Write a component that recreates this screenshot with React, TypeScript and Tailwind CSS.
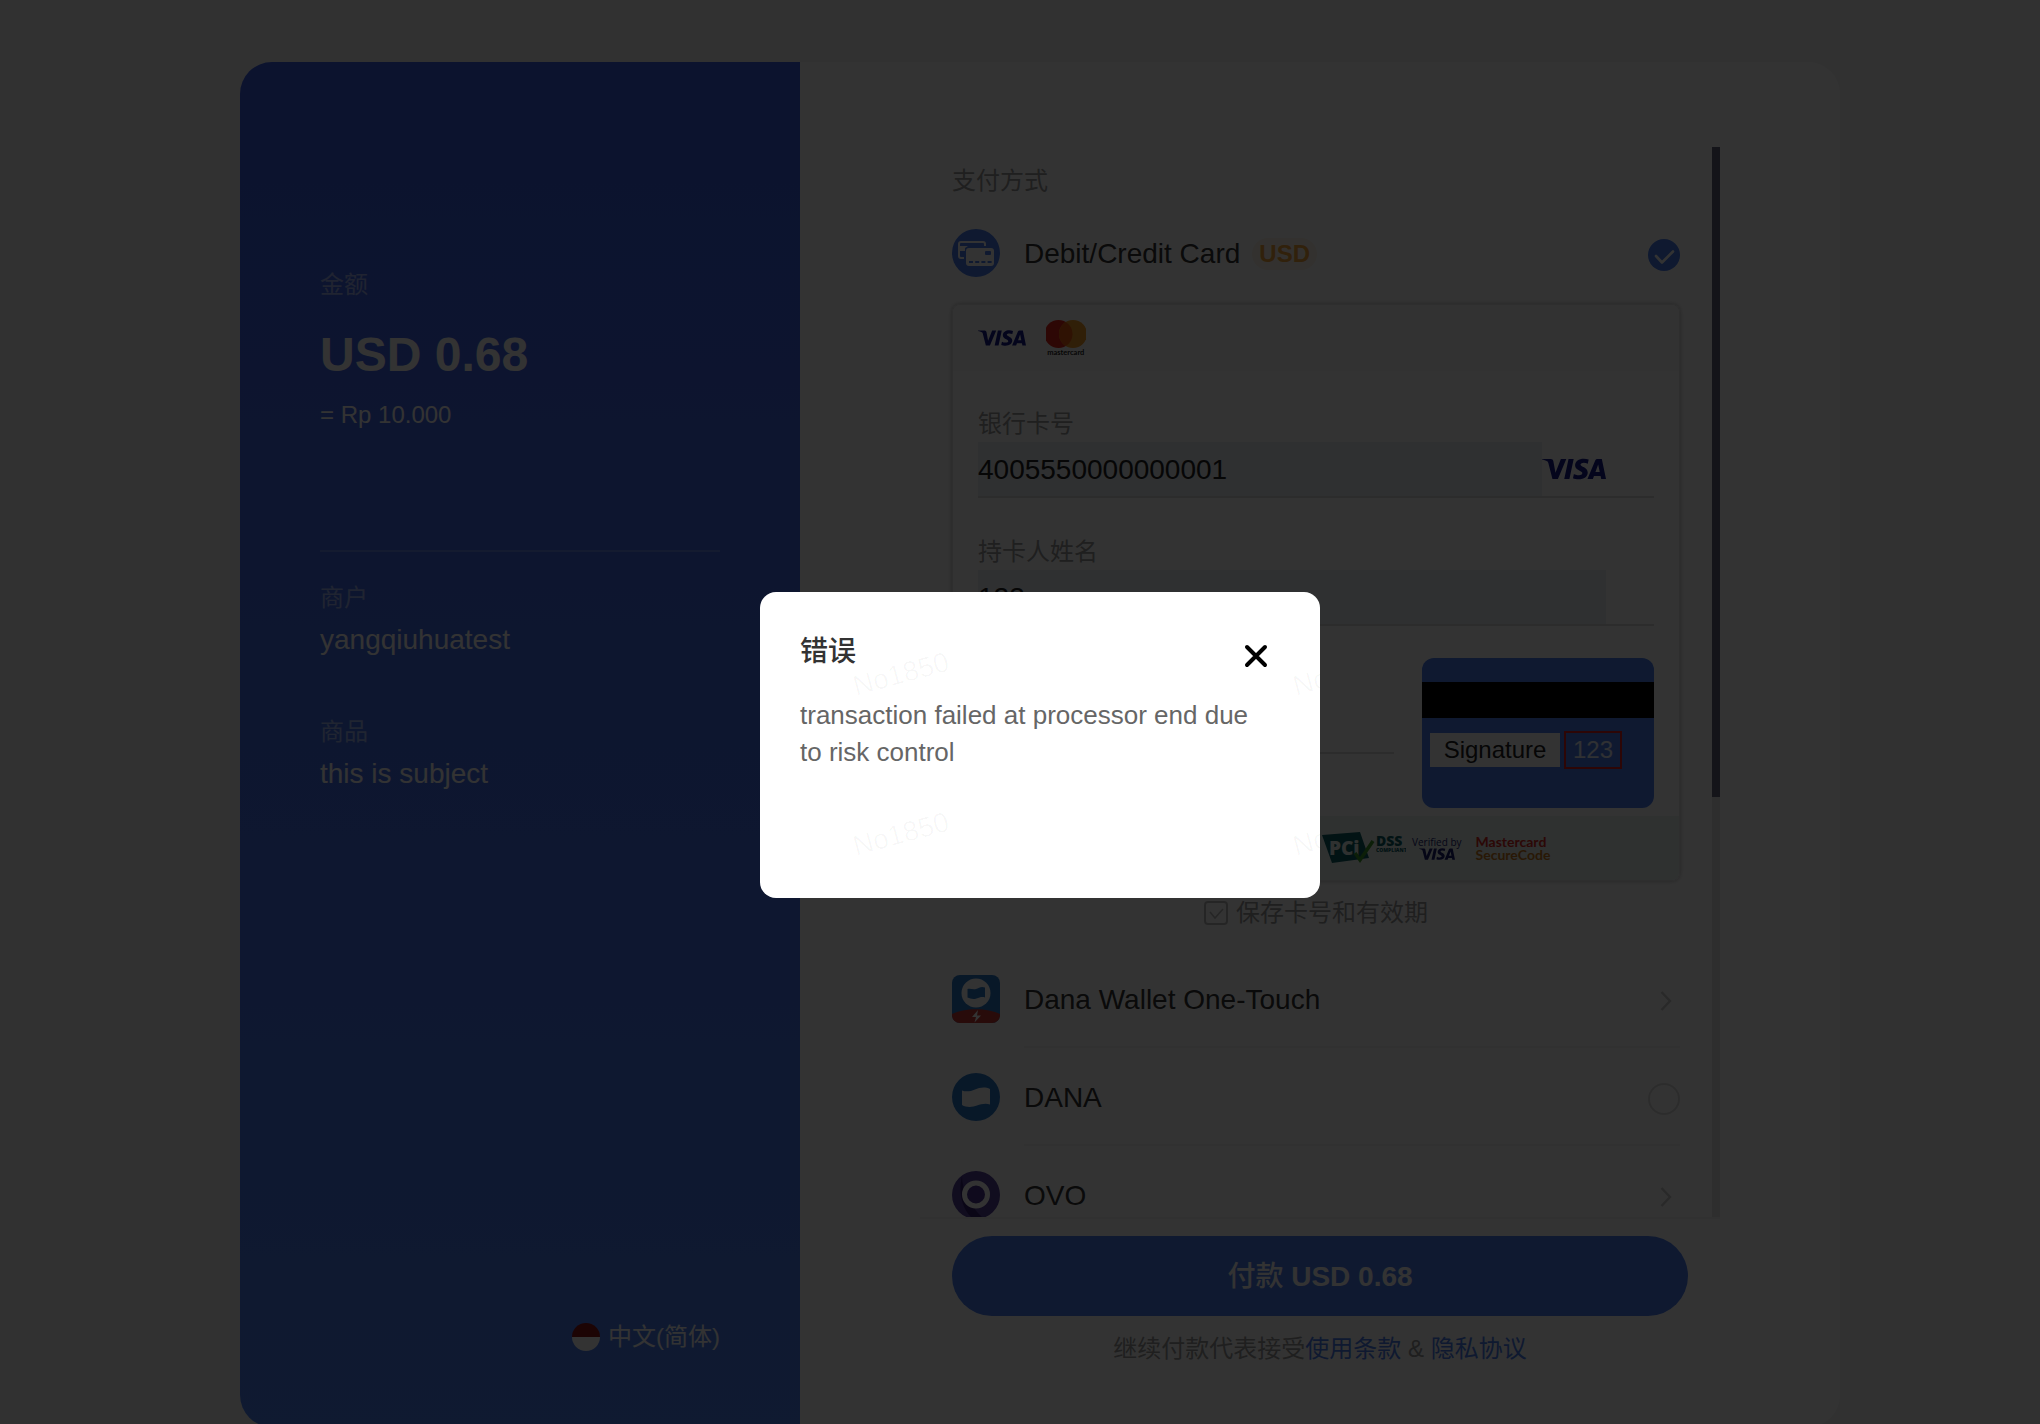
import React from "react";
import { SiVisa } from "react-icons/si";

const App: React.FC = () => {
  return (
    <div className="relative h-screen overflow-hidden bg-[#f5f5f5] font-['Liberation_Sans','Noto_Sans_CJK_SC',sans-serif]">
      <div className="pl-10 pt-[62px]">
        <main className="mx-auto flex w-full max-w-[1600px] overflow-hidden rounded-[32px] bg-white">
          <OrderSummary />
          <PaymentPanel />
        </main>
      </div>
      <ErrorDialog />
    </div>
  );
};

export default App;

/* left: amount, merchant, product and language */
function OrderSummary() {
  return (
    <aside className="flex w-[35%] shrink-0 flex-col bg-linear-to-b from-[#3d5fe6] to-[#4c80f2] px-20 pb-[72px] pt-[205px] text-white">
      <p className="text-2xl leading-9 text-white/50">金额</p>
      <p className="mt-6 text-5xl font-bold leading-[56px]">USD 0.68</p>
      <p className="mt-3.5 text-2xl leading-9">= Rp 10.000</p>
      <hr className="mt-[117px] border-t-2 border-white/20" />
      <dl>
        <dt className="mt-7 text-2xl leading-9 text-white/50">商户</dt>
        <dd className="mt-1 text-[28px] leading-10">yangqiuhuatest</dd>
        <dt className="mt-[54px] text-2xl leading-9 text-white/50">商品</dt>
        <dd className="mt-1 text-[28px] leading-10">this is subject</dd>
      </dl>
      <button type="button" className="mt-auto flex items-center gap-2 self-end text-2xl leading-9">
        <svg viewBox="0 0 28 28" className="size-7" aria-hidden="true">
          <path d="M0 14a14 14 0 0128 0z" fill="#8c1418" />
          <path d="M0 14a14 14 0 0028 0z" fill="#fff" />
        </svg>
        中文(简体)
      </button>
    </aside>
  );
}

/* right: scrolling list of methods, then the pay button */
function PaymentPanel() {
  return (
    <section className="flex min-w-0 flex-1 flex-col px-[120px] pb-[60px] pt-[85px]">
      <div className="flex h-[calc(100vh-352px)] overflow-hidden border-b-2 border-[#f5f5f5]">
        <div className="min-w-0 flex-1 px-8 pt-4">
          <p className="mb-[5px] text-2xl leading-9 text-[#999]">支付方式</p>

          <MethodRow id="card" label="Debit/Credit Card" tag="USD" end="checked" icon={<CardIcon />} />
          <CardForm />

          <label className="mt-3.5 flex items-center justify-center gap-2 text-2xl leading-9 text-[#999]">
            <span className="relative flex size-6">
              <input type="checkbox" defaultChecked className="size-6 appearance-none rounded border-2 border-[#bbb]" />
              <svg viewBox="0 0 24 24" className="absolute inset-0" fill="none" stroke="#bbb" strokeWidth="1.6" aria-hidden="true">
                <path d="M6 11l5 6 8-9" />
              </svg>
            </span>
            保存卡号和有效期
          </label>

          <div className="mt-[19px]">
            <MethodRow id="dana-ot" label="Dana Wallet One-Touch" end="arrow" icon={<DanaOneTouchIcon />} line />
            <MethodRow id="dana" label="DANA" end="radio" icon={<DanaIcon />} line />
            <MethodRow id="ovo" label="OVO" end="arrow" icon={<OvoIcon />} />
          </div>
        </div>
        {/* scroll track */}
        <div className="w-2 shrink-0 bg-[#e6e6e6]">
          <div className="h-[650px] bg-[#63657d]" />
        </div>
      </div>

      <button
        type="button"
        className="mx-8 mt-[17px] h-20 rounded-full bg-[#4a7df0] pt-0.5 text-[28px] font-bold text-white"
      >
        <span className="font-medium">付款</span> USD 0.68
      </button>
      <p className="mt-[15px] text-center text-2xl leading-9 text-[#999]">
        继续付款代表接受
        <a href="#terms" className="text-[#4a7df0]">使用条款</a> &amp;{" "}
        <a href="#privacy" className="text-[#4a7df0]">隐私协议</a>
      </p>
    </section>
  );
}

function MethodRow({
  id,
  label,
  tag,
  end,
  icon,
  line,
}: {
  id: string;
  label: string;
  tag?: string;
  end: "checked" | "radio" | "arrow";
  icon: React.ReactNode;
  line?: boolean;
}) {
  return (
    <div className="flex gap-6">
      <span className="flex h-24 shrink-0 items-center pt-0.5">{icon}</span>
      <div
        className={
          line
            ? "flex h-[98px] flex-1 items-center border-b-2 border-[#f2f2f2] pt-1"
            : "flex h-[98px] flex-1 items-center border-b-2 border-transparent pt-1"
        }
      >
        <label htmlFor={id} className="text-[28px] leading-10 text-[#333]">
          {label}
        </label>
        {tag && (
          <span className="ml-3 rounded-full bg-[#fff5e8] px-[7px] text-2xl font-bold leading-8 text-[#f5a33b]">
            {tag}
          </span>
        )}
        {end === "arrow" ? (
          <button type="button" id={id} aria-label={label} className="ml-auto mr-2 mt-0.5">
            <svg viewBox="0 0 12 20" className="h-5 w-3" fill="none" stroke="#ccc" strokeWidth="2.4" aria-hidden="true">
              <path d="M1.5 1l8.5 9-8.5 9" />
            </svg>
          </button>
        ) : (
          <span className="relative ml-auto mt-0.5 flex size-8">
            <input
              type="radio"
              name="method"
              id={id}
              defaultChecked={end === "checked"}
              className="size-8 appearance-none rounded-full border-2 border-[#ddd] checked:border-0 checked:bg-[#4a7df0]"
            />
            {end === "checked" && (
              <svg viewBox="0 0 32 32" className="absolute inset-0" fill="none" stroke="#fff" strokeWidth="2.6" strokeLinecap="round" strokeLinejoin="round" aria-hidden="true">
                <path d="M8 17l6 6.500 11-11" />
              </svg>
            )}
          </span>
        )}
      </div>
    </div>
  );
}

function CardForm() {
  return (
    <div className="mt-0.5 overflow-hidden rounded-lg border border-[#e4e4e4] shadow-[0_0_4px_rgba(0,0,0,0.3)]">
      <div className="flex h-[66px] items-center gap-5 bg-[#fafafa] px-[25px]">
        <SiVisa className="size-12 text-[#141c8c]" title="VISA" />
        <Mastercard />
      </div>

      <div className="flex flex-col gap-9 px-[25px] pb-8 pt-[35px]">
        <Field id="number" label="银行卡号" value="4005550000000001" visa />
        <Field id="holder" label="持卡人姓名" value="123" />
      </div>

      <div className="flex items-start gap-7 px-[25px]">
        <div className="h-24 flex-1 border-b-2 border-[#ddd]" />
        <CardBack />
      </div>

      <div className="mt-2 flex h-16 items-center bg-[#ebf3f1] pl-[369px]">
        <SecurityLogos />
      </div>
    </div>
  );
}

function Field({ id, label, value, visa }: { id: string; label: string; value: string; visa?: boolean }) {
  return (
    <div className="border-b-2 border-[#ddd]">
      <label htmlFor={id} className="block text-2xl leading-9 text-[#999]">
        {label}
      </label>
      <div className="flex h-[54px] items-center pr-12">
        <input
          id={id}
          defaultValue={value}
          className="h-full min-w-0 flex-1 bg-[#e8edf3] pt-0.5 text-[28px] text-[#222] outline-none"
        />
        {visa && <SiVisa className="size-16" color="#141c8c" title="VISA" />}
      </div>
    </div>
  );
}

/* back of a card, pointing at the cvv digits */
function CardBack() {
  return (
    <div className="h-[150px] w-[232px] rounded-xl bg-[#4a7df0] pt-6">
      <div className="h-9 bg-black" />
      <div className="mt-[13px] flex items-center gap-1 pl-2 text-2xl">
        <span className="flex h-[34px] w-[130px] items-center justify-center bg-white text-[#222]">Signature</span>
        <span className="flex h-[38px] w-[58px] items-center justify-center border-2 border-[#e02020] text-white/90">123</span>
      </div>
    </div>
  );
}

function Mastercard() {
  return (
    <svg viewBox="0 0 40 38" className="h-[38px] w-10" aria-label="mastercard">
      <circle cx="12.500" cy="15" r="14" fill="#e0241c" />
      <circle cx="27" cy="15" r="14" fill="#f09a28" />
      <path d="M19.750 3a14 14 0 010 24 14 14 0 010-24z" fill="#e85c12" />
      <text x="19.750" y="36" textAnchor="middle" fontSize="7.500" fontFamily="Lato, sans-serif" fontWeight="700" fill="#222">
        mastercard
      </text>
    </svg>
  );
}

function SecurityLogos() {
  return (
    <div className="flex items-center gap-1.5">
      <svg viewBox="0 0 84 32" className="h-8 w-[84px]" aria-label="PCI DSS Compliant">
        <path d="M0 3l38-3 9 26-37 5z" fill="#0d5f63" />
        <text x="7" y="23" fontSize="19" fontFamily="Open Sans, sans-serif" fontWeight="800" fill="#ebf3f1">PCi</text>
        <path d="M33 21l5 7 13-19" fill="none" stroke="#3f9a2a" strokeWidth="3.5" />
        <text x="54" y="14" fontSize="14" fontFamily="Open Sans, sans-serif" fontWeight="800" fill="#0d5f63">DSS</text>
        <text x="54" y="20" fontSize="5" fontFamily="Open Sans, sans-serif" fontWeight="800" fill="#0d5f63">COMPLIANT</text>
      </svg>
      <div className="flex flex-col items-center text-[10px] leading-3 text-[#1a1f71]">
        <span className="font-['Open_Sans',sans-serif]">Verified by</span>
        <span className="flex h-3 items-center">
          <SiVisa className="size-9" title="VISA" />
        </span>
      </div>
      <div className="ml-2 flex flex-col font-['Lato',sans-serif] text-sm font-bold leading-[13px]">
        <span className="text-[#d92a22]">Mastercard</span>
        <span className="text-[#c97a20]">SecureCode</span>
      </div>
    </div>
  );
}

/* ——— method icons ——— */
function CardIcon() {
  return (
    <svg viewBox="0 0 48 48" className="size-12" aria-hidden="true">
      <circle cx="24" cy="24" r="24" fill="#4a7df0" />
      <path d="M12 29h-3a2 2 0 01-2-2V15a2 2 0 012-2h22a2 2 0 012 2v2" fill="none" stroke="#fff" strokeWidth="2" />
      <path d="M7 17h9l-3 2v3H7z" fill="#fff" />
      <rect x="14" y="19" width="28" height="18" rx="3" fill="#fff" />
      <rect x="33" y="22" width="6" height="4" rx="1" fill="#4a7df0" />
      <path d="M17 33h23" stroke="#4a7df0" strokeWidth="2" strokeDasharray="4 2.200" />
    </svg>
  );
}

function DanaOneTouchIcon() {
  return (
    <svg viewBox="0 0 48 48" className="size-12 rounded-lg" aria-hidden="true">
      <rect width="48" height="48" fill="#2a78c8" />
      <circle cx="24" cy="18" r="14.500" fill="#fff" />
      <path d="M15.500 14c3-1 5.500 1 8.500 0s5-3 9-1.500v10c-3-1-5.500 0-8.500 1s-6 .5-9-1z" fill="#2a78c8" />
      <path d="M0 39c12-6.500 36-6.500 48 0v9H0z" fill="#c83a34" />
      <path d="M26 35l-6 7h4l-1.500 5.500 6.500-7h-4z" fill="#fff" />
    </svg>
  );
}

function DanaIcon() {
  return (
    <svg viewBox="0 0 48 48" className="size-12" aria-hidden="true">
      <circle cx="24" cy="24" r="24" fill="#2a78c8" />
      <path d="M10 17.500c4 1.500 8.500 1 13-1s10-3 15-.5v15.500c-4-1.500-9-.5-13 1s-10 2.500-15-.5z" fill="#fff" />
    </svg>
  );
}

function OvoIcon() {
  return (
    <svg viewBox="0 0 48 48" className="size-12" aria-hidden="true">
      <circle cx="24" cy="24" r="24" fill="#55409a" />
      <path d="M10 5c0 14 8 30 21 42a24 24 0 01-11 0C10 38 6 22 10 5z" fill="#341f6e" />
      <circle cx="24" cy="23.500" r="11.500" fill="#4b3590" stroke="#fff" strokeWidth="5" />
    </svg>
  );
}

/* dimmed backdrop and the message over it */
function ErrorDialog() {
  return (
    <div className="absolute inset-0 flex items-center justify-center bg-black/80 pl-10 pt-[66px]">
      <div role="alertdialog" aria-labelledby="err-title" className="relative min-h-[306px] w-[560px] overflow-hidden rounded-2xl bg-white px-10 pt-10">
        <div className="flex items-start justify-between">
          <h2 id="err-title" className="text-[28px] font-medium leading-10 text-[#333]">
            错误
          </h2>
          <button type="button" aria-label="关闭" className="mr-3 mt-3">
            <svg viewBox="0 0 24 24" className="size-6" stroke="#000" strokeWidth="4" strokeLinecap="round" aria-hidden="true">
              <path d="M3 3l18 18M21 3L3 21" />
            </svg>
          </button>
        </div>
        <p className="mt-[25px] pr-5 text-[26px] leading-[37px] text-[#666]">
          transaction failed at processor end due to risk control
        </p>
        {/* user watermark */}
        <div aria-hidden="true" className="pointer-events-none absolute left-[92px] top-[62px] grid grid-cols-[440px_100px] gap-y-[120px] text-[28px] leading-10 text-black/3">
          {[0, 1, 2, 3].map((n) => (
            <span key={n} className="w-[100px] -rotate-15">No1850</span>
          ))}
        </div>
      </div>
    </div>
  );
}
